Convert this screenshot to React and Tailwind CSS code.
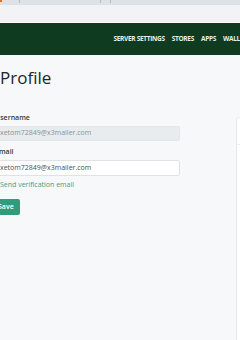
import React from "react";

const NavLink = ({ children }) => (
	<span className="text-[6.5px] font-bold uppercase tracking-[-0.3px] text-[#e8efe9] whitespace-nowrap">
		{children}
	</span>
);

const Field = ({ label, value, disabled }) => (
	<div className="flex flex-col">
		<label className="ml-[2px] text-[7px] font-semibold text-[#343a40] leading-[9px] mb-[4px]">
			{label}
		</label>
		<div
			className={
				disabled
					? "h-[15px] w-[187px] rounded-[2px] border border-[#e3e6ea] bg-[#e9ecef] px-[6px] flex items-center text-[7px] text-[#8a9097]"
					: "h-[16px] w-[187px] rounded-[2px] border border-[#dfe2e6] bg-white px-[6px] flex items-center text-[7px] text-[#495057]"
			}
		>
			{value}
		</div>
	</div>
);

export default function App() {
	return (
		<div
			className="w-[240px] h-[340px] overflow-hidden bg-[#f7f8fa] flex flex-col"
			style={{ fontFamily: '"Open Sans", "Liberation Sans", sans-serif' }}
		>
			{/* browser chrome */}
			<div className="h-[5px] bg-[#dee1e6] flex items-start shrink-0">
				<div className="w-[2px] h-[2px] bg-[#e8711c]" />
				<div className="ml-[17px] w-px h-[3px] bg-[#b8bcc2]" />
				<div className="ml-[80px] w-px h-[3px] bg-[#b8bcc2]" />
				<div className="ml-[9px] w-px h-[3px] bg-[#b8bcc2]" />
			</div>
			<div className="h-[17px] bg-[#f1f3f4] shrink-0" />
			<div className="h-[1px] bg-[#fafafa] shrink-0" />

			{/* header */}
			<div className="h-[32px] bg-[#0f3b21] flex items-center justify-end shrink-0 overflow-hidden">
				<div className="flex items-center gap-[7px] -mr-[10px]">
					<NavLink>Server Settings</NavLink>
					<NavLink>Stores</NavLink>
					<NavLink>Apps</NavLink>
					<NavLink>Wallets</NavLink>
				</div>
			</div>

			{/* content */}
			<div className="flex flex-1 -ml-[7px]">
				<div className="flex flex-col w-[243px] shrink-0">
					<h2 className="ml-[7px] mt-[12px] text-[17px] font-normal text-[#212529] leading-[22px]">
						Profile
					</h2>
					<div className="mt-[24px] flex flex-col gap-[6px]">
						<Field label="Username" value="xetom72849@x3mailer.com" disabled />
						<div className="flex flex-col">
							<Field label="Email" value="xetom72849@x3mailer.com" />
							<span className="ml-[7px] mt-[4px] text-[7px] text-[#3aa17f] leading-[9px]">
								Send verification email
							</span>
						</div>
					</div>
					<button className="mt-[10px] -ml-px self-start h-[16px] px-[6px] rounded-[2px] bg-[#2f9d7b] text-white text-[7px] font-semibold">
						Save
					</button>
				</div>
				<div className="mt-[62px] h-[240px] w-[40px] shrink-0 bg-white border border-[#e6e8eb] rounded-[2px] flex flex-col">
					<div className="h-[27px] border-b border-[#eceef0]" />
				</div>
			</div>
		</div>
	);
}
